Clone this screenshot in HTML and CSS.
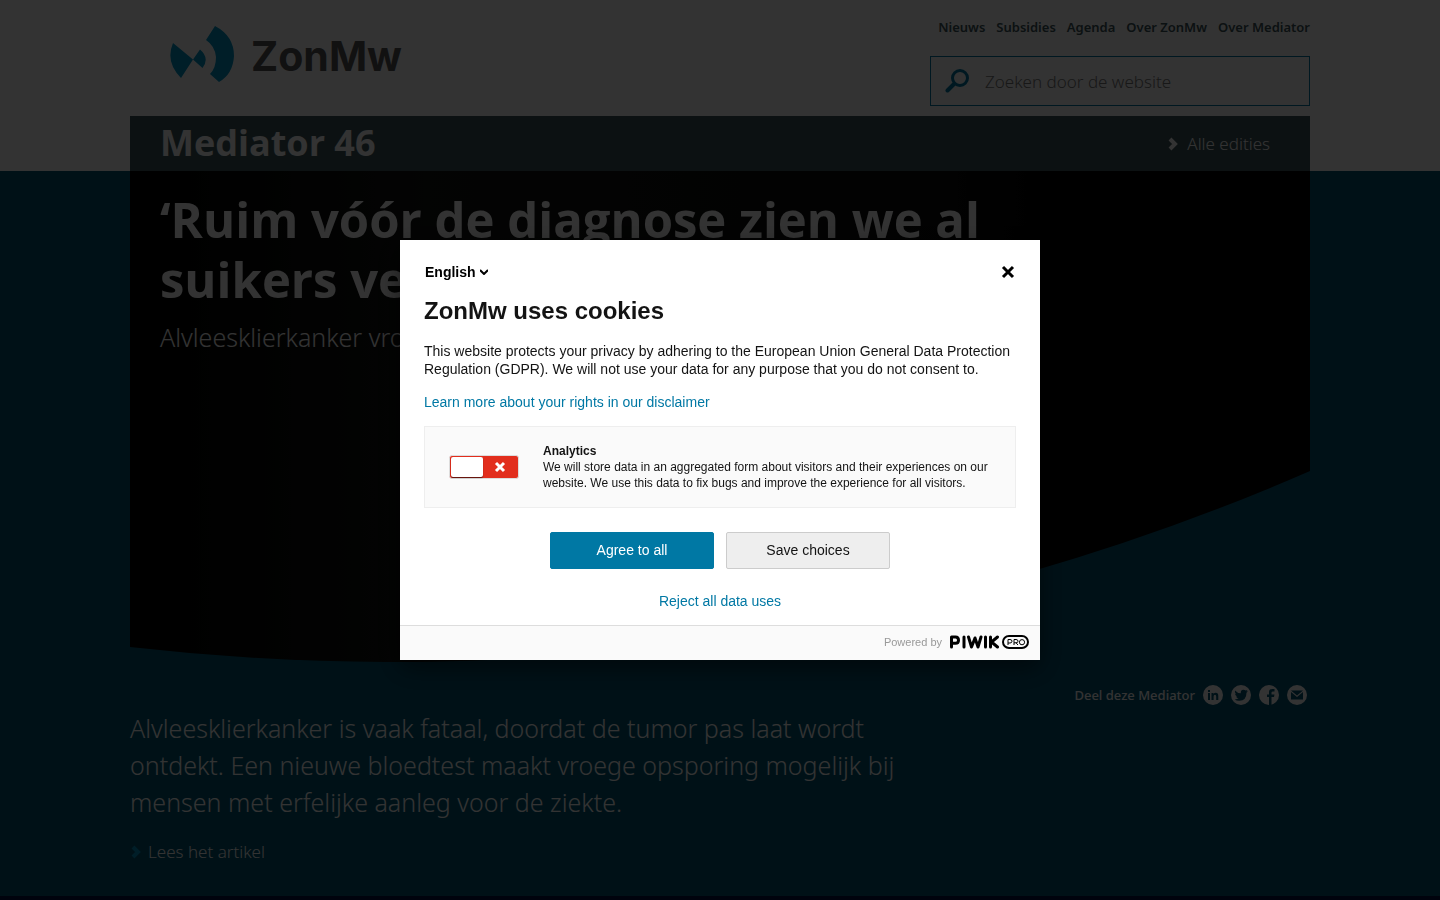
FILE: index.html
```html
<!DOCTYPE html>
<html lang="nl">
<head>
<meta charset="utf-8">
<meta name="viewport" content="width=device-width, initial-scale=1">
<title>Mediator 46 - ZonMw</title>
<link rel="stylesheet" href="styles.css">
</head>
<body>
<header class="site-header">
  <div class="container">
    <div class="header-top">
      <a class="logo" href="#">
        <svg class="logo-mark" viewBox="0 0 64 56" aria-hidden="true"><path d="M3 17L23 33.500L11 52Q-5 36 3 17ZM23 33.500L30 23.500Q40 32 32.500 42ZM45 0Q64 10 64 30Q63 48 49 56L40 48Q46 42 46 31Q45 20 36 14Z"/></svg>
        <span class="logo-name">ZonMw</span>
      </a>
      <div class="header-tools">
        <nav class="top-nav" aria-label="Hoofdmenu">
          <a href="#">Nieuws</a><a href="#">Subsidies</a><a href="#">Agenda</a><a href="#">Over ZonMw</a><a href="#">Over Mediator</a>
        </nav>
        <form class="search" role="search">
          <button class="search-button" type="button" aria-label="Zoeken">
            <svg viewBox="0 0 24 24" aria-hidden="true"><circle cx="15" cy="9" r="7.500"/><path class="handle" d="M9 15L2.500 21.500"/></svg>
          </button>
          <input class="search-input" type="search" aria-label="Zoeken door de website" placeholder="Zoeken door de website">
        </form>
      </div>
    </div>
    <div class="edition-bar">
      <a class="edition-title" href="#">Mediator 46</a>
      <a class="arrow-link" href="#"><svg class="chevron" viewBox="0 0 10 14" aria-hidden="true"><path d="M2 2L7 7L2 12"/></svg>Alle edities</a>
    </div>
  </div>
</header>
<main class="feature">
  <div class="container">
    <section class="hero">
      <svg class="hero-shape" viewBox="0 0 1180 491" preserveAspectRatio="none" aria-hidden="true">
        <defs><linearGradient id="shade"><stop offset="0" stop-color="#000"/><stop offset=".25" stop-color="#121412"/><stop offset=".7" stop-color="#0a0a0a"/><stop offset=".8" stop-color="#000"/></linearGradient></defs>
        <path fill="url(#shade)" d="M0 0H1180V300A2300 2300 0 0 1 0 476Z"/>
      </svg>
      <div class="hero-text">
        <h1>‘Ruim vóór de diagnose zien we al suikers veranderen’</h1>
        <p>Alvleesklierkanker vroeg opsporen</p>
      </div>
    </section>
    <div class="share">
      <span class="share-label">Deel deze Mediator</span>
      <a href="#" aria-label="LinkedIn"><svg viewBox="0 0 20 20"><circle cx="10" cy="10" r="10"/><path class="cut" d="M5 8H7V15H5ZM5 5H7V7H5ZM8.500 8H10.500V9Q11.300 7.800 12.800 7.800Q15.300 7.800 15.300 11V15H13.200V11.500Q13.200 9.700 12 9.700Q10.600 9.700 10.600 11.500V15H8.500Z"/></svg></a>
      <a href="#" aria-label="Twitter"><svg viewBox="0 0 20 20"><circle cx="10" cy="10" r="10"/><path class="cut" d="M4 5.500Q6.500 8.300 9.800 8.300Q9.400 5 12.300 4.700Q13.700 4.600 14.600 5.600L16.500 4.900L15.500 6.500L17 6.200L15.500 7.700Q15.500 15.500 8.300 15.700Q5.500 15.700 3.600 14.400Q6 14.500 7.500 13.300Q5.600 13 5 11.400H6.200Q4.100 10.500 4 8.500L5.200 8.900Q3.200 7.500 4 5.500Z"/></svg></a>
      <a href="#" aria-label="Facebook"><svg viewBox="0 0 20 20"><circle cx="10" cy="10" r="10"/><path class="cut" d="M10 20V12H8V9.500H10V7Q10 4 13.500 4H15.500V6.500H14Q12.500 6.500 12.500 7.500V9.500H15.500L15 12H12.500V20Z"/></svg></a>
      <a href="#" aria-label="E-mail"><svg viewBox="0 0 20 20"><circle cx="10" cy="10" r="10"/><path class="cut" d="M4 5.500H16L10 10.500ZM4 7L10 12L16 7V14.500H4Z"/></svg></a>
    </div>
    <p class="intro">Alvleesklierkanker is vaak fataal, doordat de tumor pas laat wordt ontdekt. Een nieuwe bloedtest maakt vroege opsporing mogelijk bij mensen met erfelijke aanleg voor de ziekte.</p>
    <a class="arrow-link read-more" href="#"><svg class="chevron" viewBox="0 0 10 14" aria-hidden="true"><path d="M2 2L7 7L2 12"/></svg>Lees het artikel</a>
  </div>
</main>

<div class="overlay">
  <div class="dialog" role="dialog" aria-modal="true" aria-labelledby="consent-title">
    <div class="dialog-body">
      <div class="dialog-top">
        <div class="language">
          <select aria-label="Language"><option>English</option></select>
          <svg viewBox="0 0 8 6" aria-hidden="true"><path d="M0 1L4 5L8 1"/></svg>
        </div>
        <button class="close" type="button" aria-label="Close"><svg viewBox="0 0 16 16" aria-hidden="true"><path d="M3 3L13 13M13 3L3 13"/></svg></button>
      </div>
      <h2 id="consent-title">ZonMw uses cookies</h2>
      <p class="consent-text">This website protects your privacy by adhering to the European Union General Data Protection Regulation (GDPR). We will not use your data for any purpose that you do not consent to.</p>
      <a class="consent-link" href="#">Learn more about your rights in our disclaimer</a>
      <label class="option" for="analytics">
        <input class="option-check" id="analytics" type="checkbox">
        <span class="switch"><span class="knob"></span><svg viewBox="0 0 12 12" aria-hidden="true"><path d="M2 2L10 10M10 2L2 10"/></svg></span>
        <span class="option-text"><strong>Analytics</strong>We will store data in an aggregated form about visitors and their experiences on our website. We use this data to fix bugs and improve the experience for all visitors.</span>
      </label>
      <div class="actions">
        <button class="button button-primary" type="button">Agree to all</button>
        <button class="button" type="button">Save choices</button>
      </div>
      <button class="reject" type="button">Reject all data uses</button>
    </div>
    <div class="dialog-footer">
      <span>Powered by</span>
      <a href="#" aria-label="Piwik PRO"><svg class="piwik" viewBox="0 0 80 14" aria-hidden="true">
        <g class="piwik-thick"><path d="M2.500 12V2H6.500Q9.500 2 9.500 5.200Q9.500 8.300 6.500 8.300H2.500M15 2V12M19.500 2L22.500 12L26 3L29 12L32 2M36.500 2V12M41.500 2V12M48.500 2L42.500 7L48.500 12"/></g>
        <rect x="54" y="1" width="25" height="12" rx="6"/>
        <g class="piwik-thin"><path d="M59 10V4.500H61Q63 4.500 63 6.200Q63 8 61 8H59M65 10V4.500H67Q69 4.500 69 6.200Q69 7.800 67 7.800H65M67 7.800L69 10"/><circle cx="73" cy="7.200" r="2.600"/></g>
      </svg></a>
    </div>
  </div>
</div>
</body>
</html>
```
FILE: styles.css
```css
* { box-sizing: border-box; }
body {
  margin: 0;
  min-height: 100vh;
  display: flex;
  flex-direction: column;
  background: #001040;
  color: #333;
  font-family: "Noto Sans", "Open Sans", sans-serif;
}
a { color: inherit; text-decoration: none; }
svg { display: block; }
button, input, select { font: inherit; color: inherit; }
button { padding: 0; border: 0; background: none; cursor: pointer; }
.container { width: 100%; max-width: 1180px; margin: 0 auto; }

.site-header { background: #fff; }
.header-top { display: flex; justify-content: space-between; height: 116px; }
.logo { display: flex; align-items: center; gap: 17px; padding: 0 0 8px 40px; }
.logo-mark { width: 64px; height: 56px; fill: #0096c8; }
.logo-name { font: 700 41px/56px Inter, sans-serif; color: #555; padding-top: 4px; }
.header-tools { width: 380px; }
.top-nav { display: flex; justify-content: flex-end; gap: 11px; padding: 17px 0 19px; font-size: 13px; font-weight: 600; line-height: 20px; white-space: nowrap; color: #3c5559; }
.search { display: flex; align-items: center; height: 50px; border: 1px solid #007ba6; }
.search-button { padding: 0 14px; }
.search-button svg { width: 24px; height: 24px; fill: none; stroke: #007ba6; stroke-width: 3; stroke-linecap: round; }
.search-button .handle { stroke-width: 4; }
.search-input { flex: 1; min-width: 0; padding: 0 2px; border: 0; outline: 0; background: none; font-size: 17px; font-weight: 300; }
.search-input::placeholder { color: #777; opacity: 1; }
.edition-bar { display: flex; justify-content: space-between; align-items: center; height: 55px; padding: 0 40px 0 30px; background: #3c5559; color: #fff; }
.edition-title { padding-bottom: 2px; font-family: "Open Sans", sans-serif; font-size: 36px; font-weight: 700; line-height: 50px; }
.arrow-link { display: flex; align-items: center; gap: 9px; font-size: 17px; font-weight: 300; line-height: 24px; color: #fff; }
.chevron { width: 10px; height: 14px; fill: none; stroke: currentColor; stroke-width: 4; }

.feature { background: #005573; color: #fff; padding-bottom: 32px; }
.hero { display: grid; }
.hero-shape, .hero-text { grid-area: 1 / 1; }
.hero-shape { width: 100%; height: 491px; }
.hero-text { max-width: 880px; padding: 18px 30px 0; }
.hero-text h1 { margin: 0; font-family: "Open Sans", sans-serif; font-size: 49px; font-weight: 700; line-height: 60px; }
.hero-text p { margin: 10px 0 0; font-size: 25px; font-weight: 300; line-height: 36px; }
.share { display: flex; justify-content: flex-end; align-items: center; gap: 8px; margin-top: 22px; padding-right: 3px; font-size: 13px; font-weight: 500; line-height: 22px; }
.share svg { width: 20px; height: 20px; fill: #fff; }
.share .cut { fill: #005573; }
.intro { max-width: 800px; margin: 4px 0 19px; font-size: 25px; font-weight: 300; line-height: 37px; }
.read-more { gap: 7px; padding-left: 1px; }
.read-more .chevron { color: #0096c8; }

.overlay {
  position: fixed;
  inset: 0;
  display: flex;
  align-items: center;
  justify-content: center;
  background: rgba(0, 0, 0, .8);
  font-family: "Liberation Sans", Arial, sans-serif;
  color: #131313;
}
.dialog { width: 100%; max-width: 640px; background: #fff; box-shadow: 0 8px 24px rgba(0, 0, 0, .5); font-size: 14px; line-height: 18px; }
.dialog-body { display: flex; flex-direction: column; align-items: flex-start; padding: 22px 24px 15px; }
.dialog-top { display: flex; justify-content: space-between; align-items: center; width: 100%; height: 20px; color: #000; }
.language { display: flex; align-items: center; padding-left: 1px; font-weight: 700; }
.language select { appearance: none; margin: 0; padding: 0 4px 0 0; border: 0; background: none; }
.language svg { width: 8px; height: 6px; fill: none; stroke: #000; stroke-width: 2; }
.close svg { width: 16px; height: 16px; fill: none; stroke: #000; stroke-width: 3; }
.dialog h2 { margin: 14px 0 16px; font-size: 24px; line-height: 30px; }
.consent-text { margin: 0 0 15px; }
.consent-link, .reject { color: #0078a4; }
.option { display: flex; align-items: center; gap: 24px; width: 100%; margin: 15px 0 24px; padding: 16px 24px; border: 1px solid #eee; background: #fafafa; font-size: 12px; line-height: 16px; cursor: pointer; }
.option-check { position: absolute; opacity: 0; }
.switch { display: flex; flex: none; width: 70px; height: 24px; padding: 1px; border: 1px solid #ddd; border-radius: 3px; background: #e22e1d; }
.knob { width: 32px; height: 20px; border-radius: 2px; background: #fff; box-shadow: 0 1px 1px rgba(0, 0, 0, .6); }
.switch svg { width: 12px; height: 12px; margin: 4px auto; fill: none; stroke: #fff; stroke-width: 3; }
.option-text strong { display: block; }
.actions { display: flex; align-self: center; gap: 12px; }
.button { width: 164px; height: 37px; padding-bottom: 2px; border: 1px solid #ccc; border-radius: 2px; background: #eee; }
.button-primary { border-color: #0078a4; background: #0078a4; color: #fff; }
.reject { align-self: center; margin-top: 23px; line-height: 18px; }
.dialog-footer { display: flex; justify-content: flex-end; align-items: center; gap: 7px; height: 35px; padding: 0 11px 2px 0; border-top: 1px solid #ddd; background: #fafafa; color: #999; font-size: 11px; }
.piwik { width: 80px; height: 14px; fill: none; stroke: #000; stroke-width: 2; }
.piwik-thick { stroke-width: 3; stroke-linecap: round; stroke-linejoin: round; }
.piwik-thin { stroke-width: 1; }
```
